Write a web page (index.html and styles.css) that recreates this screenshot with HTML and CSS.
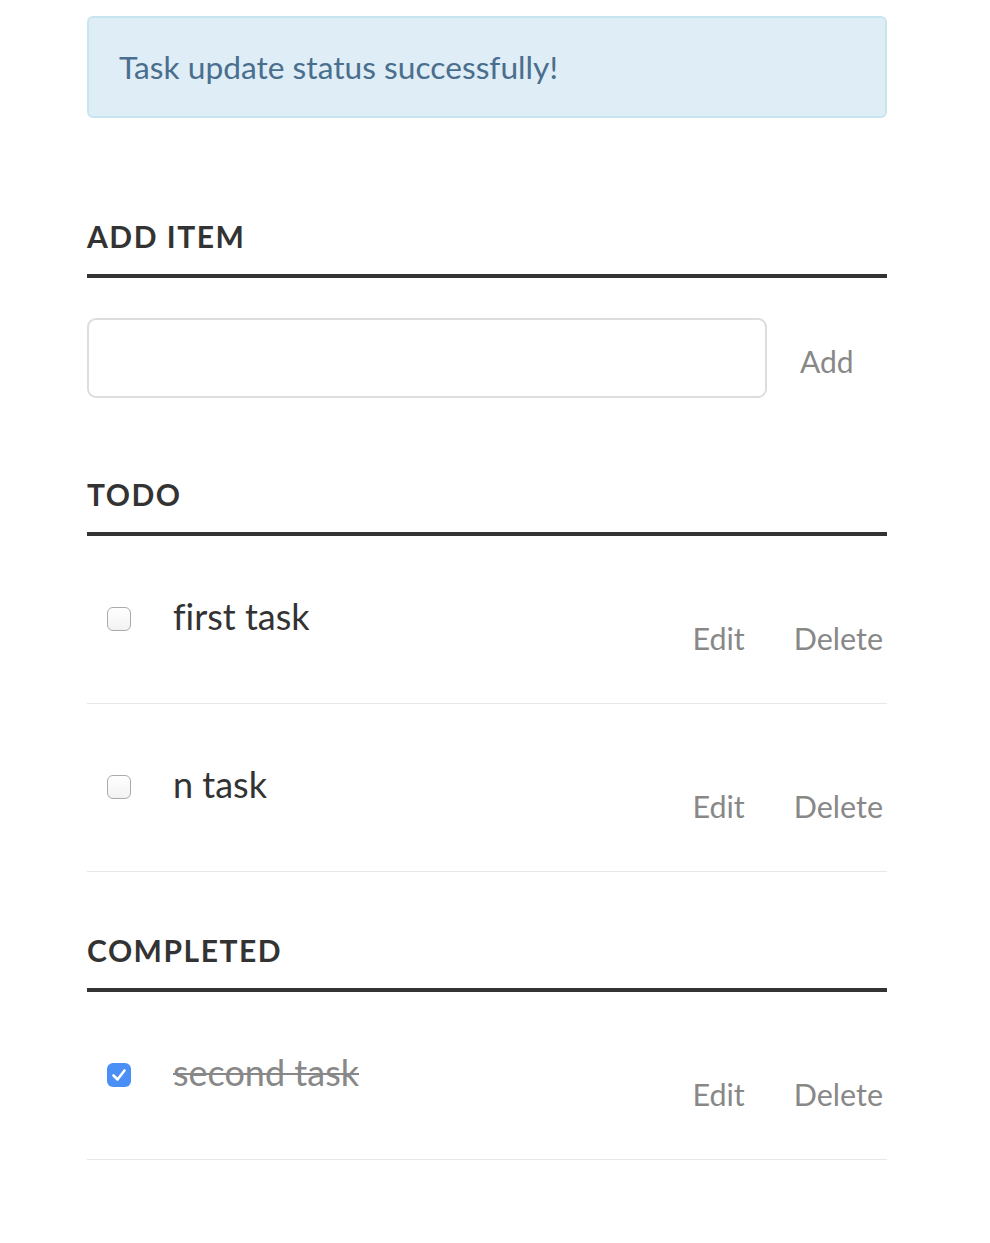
FILE: index.html
```html
<!DOCTYPE html>
<html>
<head>
<meta charset="utf-8">
<link rel="stylesheet" href="styles.css">
</head>
<body>
<div class="container">
  <div class="alert">Task update status successfully!</div>

  <h2 class="heading heading-add">Add Item</h2>
  <div class="add-row">
    <input class="add-input" type="text">
    <span class="add-btn">Add</span>
  </div>

  <h2 class="heading heading-todo">Todo</h2>
  <ul class="list">
    <li class="item">
      <span class="check"></span>
      <span class="label">first task</span>
      <span class="actions"><span class="act">Edit</span><span class="act">Delete</span></span>
    </li>
    <li class="item">
      <span class="check"></span>
      <span class="label">n task</span>
      <span class="actions"><span class="act">Edit</span><span class="act">Delete</span></span>
    </li>
  </ul>

  <h2 class="heading heading-done">Completed</h2>
  <ul class="list">
    <li class="item">
      <span class="check checked"><svg viewBox="0 0 24 24" width="24" height="24"><path d="M6.5 12.5 L10.5 16.5 L17.5 7.5" fill="none" stroke="#fff" stroke-width="2.6" stroke-linecap="round" stroke-linejoin="round"/></svg></span>
      <span class="label done">second task</span>
      <span class="actions"><span class="act">Edit</span><span class="act">Delete</span></span>
    </li>
  </ul>
</div>
</body>
</html>
```

FILE: styles.css
```css
html, body {
  margin: 0;
  padding: 0;
  background: #fff;
}
body {
  font-family: Lato, "Open Sans", sans-serif;
  color: #333;
  font-variant-ligatures: none;
}
.container {
  width: 800px;
  margin-left: 87px;
  padding-top: 16px;
}
.alert {
  box-sizing: border-box;
  height: 102px;
  background: #dfedf6;
  border: 2px solid #c7e5ef;
  border-radius: 6px;
  color: #4a6e8d;
  font-size: 31.7px;
  padding-left: 30px;
  display: flex;
  align-items: center;
}
.heading {
  margin: 0;
  font-size: 30px;
  font-weight: 700;
  text-transform: uppercase;
  letter-spacing: 1.5px;
  color: #333;
  line-height: 36px;
  padding-bottom: 20px;
  border-bottom: 4px solid #333;
}
.heading-add { margin-top: 100px; }
.heading-todo { margin-top: 78px; }
.heading-done { margin-top: 60px; }
.add-row {
  display: flex;
  align-items: center;
  margin-top: 40px;
}
.add-input {
  box-sizing: border-box;
  width: 680px;
  height: 80px;
  border: 2px solid #ddd;
  border-radius: 9px;
  margin: 0;
  outline: none;
  font: inherit;
}
.add-btn {
  margin-left: 33px;
  padding-top: 5px;
  font-size: 30px;
  color: #888;
}
.list {
  list-style: none;
  margin: 0;
  padding: 0;
}
.item {
  box-sizing: border-box;
  height: 168px;
  border-bottom: 1.5px solid #e8e8e8;
  display: flex;
  align-items: flex-start;
  padding-top: 62px;
  padding-left: 20px;
}
.check {
  box-sizing: border-box;
  width: 24px;
  height: 24px;
  margin-top: 9px;
  border: 1.5px solid #aaa;
  border-radius: 6px;
  background: linear-gradient(#fff, #f2f2f2);
  flex: none;
}
.check.checked {
  border: none;
  background: #4a8ff6;
}
.check svg { display: block; }
.label {
  margin-left: 42px;
  font-size: 36px;
  line-height: 36px;
  color: #333;
  flex: 1;
}
.label.done {
  color: #888;
  text-decoration: line-through;
  text-decoration-thickness: 2px;
}
.actions {
  display: flex;
  gap: 49px;
  margin-top: 23px;
  padding-right: 4px;
  font-size: 30.5px;
  line-height: 34px;
  color: #888;
}
```
